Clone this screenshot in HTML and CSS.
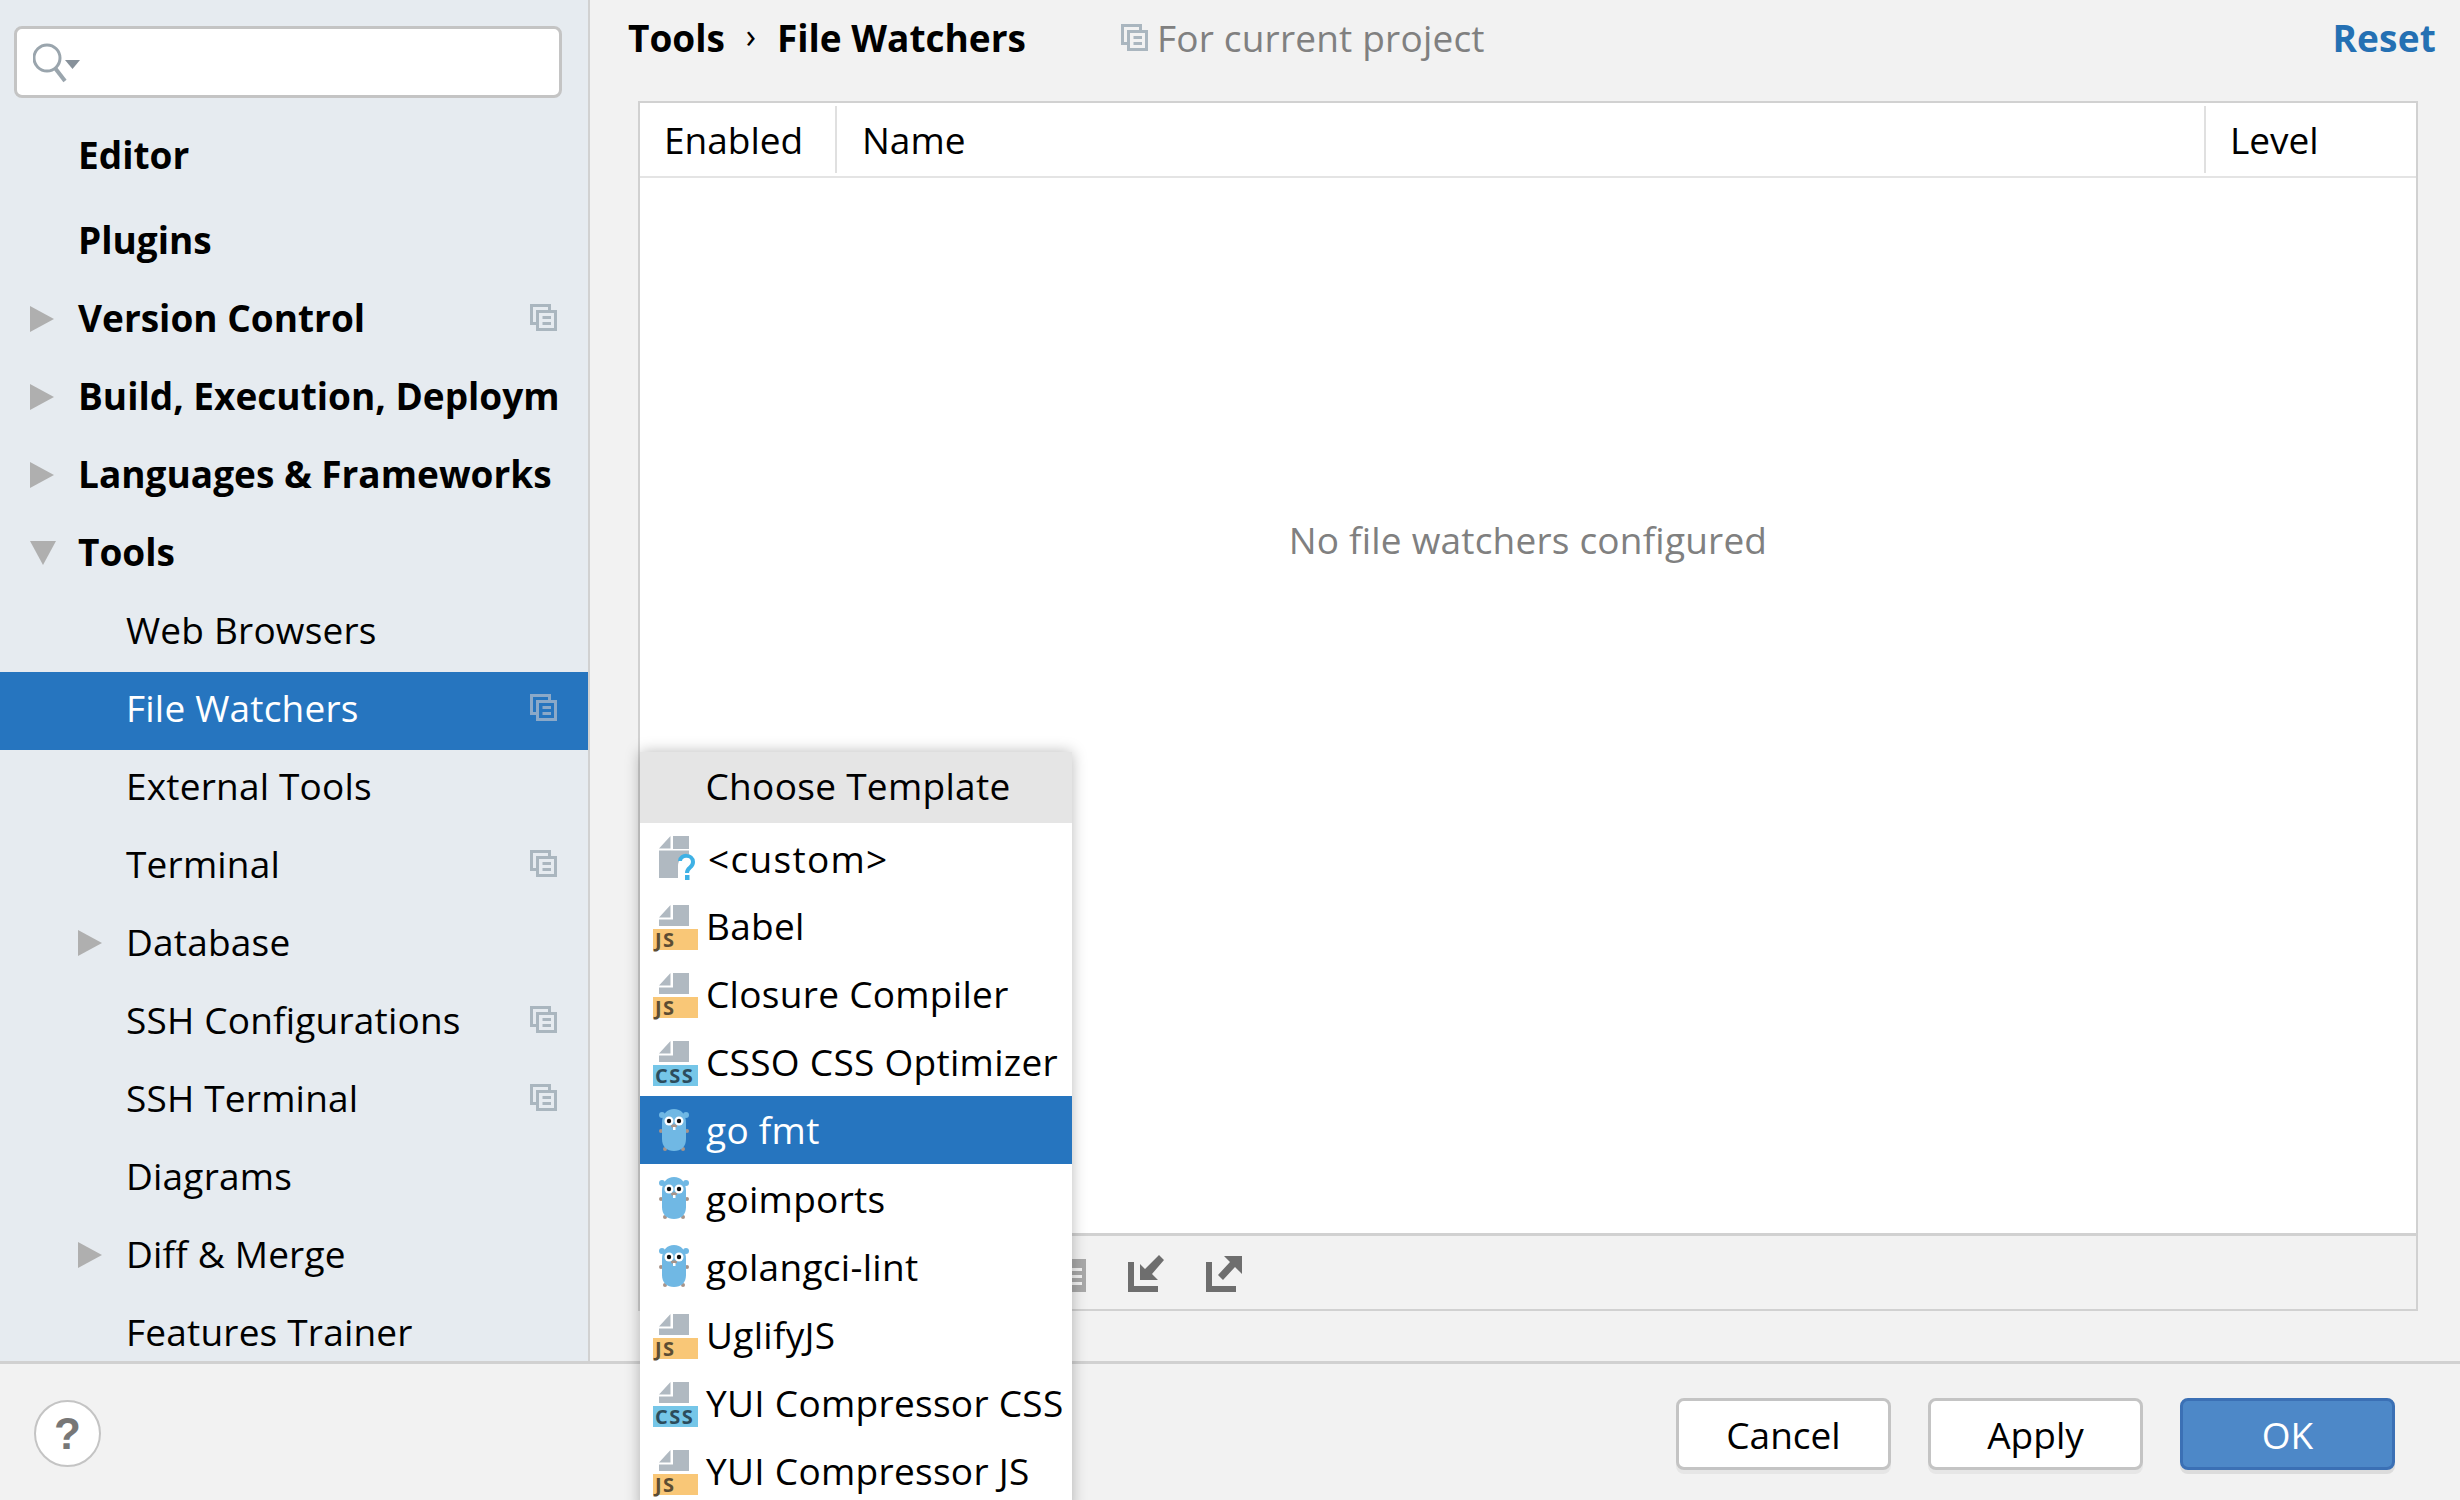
FILE: index.html
```html
<!DOCTYPE html>
<html>
  <head>
    <meta charset="UTF-8">
    <title>Settings - File Watchers</title>
    <link rel="stylesheet" href="styles.css">
  </head>
  <body>
    <svg class="defs" width="0" height="0">
      <symbol id="copy" viewBox="0 0 27 27">
        <path d="M0 0h21v6h-3V3H3v15h3v3H0z" fill="currentColor"/>
        <path d="M6 6h21v21H6zM9 9v15h15V9z" fill="currentColor" fill-rule="evenodd"/>
        <path d="M12.500 12H21v3h-8.500zM12.500 18H21v3h-8.500z" fill="currentColor"/>
      </symbol>
      <symbol id="file" viewBox="0 0 30 21">
        <path d="M0 12.500L11.500 0v12.500zM14 0h16v21H0v-6.500h14z" fill="#b0b9c1"/>
      </symbol>
      <symbol id="gopher" viewBox="0 0 30 42">
        <circle cx="3" cy="6" r="3" fill="#70b8e4"/>
        <circle cx="27" cy="6" r="3" fill="#70b8e4"/>
        <circle cx="2" cy="22" r="2" fill="#a8948a"/>
        <circle cx="28" cy="22" r="2" fill="#a8948a"/>
        <circle cx="6" cy="40" r="2" fill="#a8948a"/>
        <circle cx="24" cy="40" r="2" fill="#a8948a"/>
        <path d="M3 14C3 5 8 0 15 0s12 5 12 14v16c0 8-5 12-12 12S3 38 3 30z" fill="#70b8e4"/>
        <circle cx="10" cy="12" r="4.500" fill="#fff"/>
        <circle cx="20" cy="12" r="4.500" fill="#fff"/>
        <circle cx="10" cy="12" r="2.200" fill="#111"/>
        <circle cx="20" cy="12" r="2.200" fill="#111"/>
        <ellipse cx="15" cy="17" rx="3" ry="1.800" fill="#a8948a"/>
        <rect x="14" y="18" width="2.500" height="3" fill="#fff"/>
      </symbol>
    </svg>

    <div class="app">
      <aside class="sidebar">
        <div class="search">
          <svg class="search-icon" width="48" height="44" viewBox="0 0 48 44">
            <circle cx="14" cy="16" r="13" fill="none" stroke="#9aa5ad" stroke-width="3"/>
            <path d="M22 26l10 13" stroke="#9aa5ad" stroke-width="4"/>
            <path d="M32 18h15l-7.500 9z" fill="#87919a"/>
          </svg>
        </div>
        <ul class="tree">
          <li class="row top"><span class="arrow-slot"></span>Editor</li>
          <li class="row top plugins"><span class="arrow-slot"></span>Plugins</li>
          <li class="row top"><span class="arrow-slot"><i class="arrow"></i></span><span class="label">Version Control</span><svg class="copy"><use href="#copy"/></svg></li>
          <li class="row top"><span class="arrow-slot"><i class="arrow"></i></span><span class="label">Build, Execution, Deploym</span></li>
          <li class="row top"><span class="arrow-slot"><i class="arrow"></i></span><span class="label">Languages &amp; Frameworks</span></li>
          <li class="row top"><span class="arrow-slot"><i class="arrow down"></i></span><span class="label">Tools</span></li>
          <li class="row sub"><span class="label">Web Browsers</span></li>
          <li class="row sub selected"><span class="label">File Watchers</span><svg class="copy"><use href="#copy"/></svg></li>
          <li class="row sub"><span class="label">External Tools</span></li>
          <li class="row sub"><span class="label">Terminal</span><svg class="copy"><use href="#copy"/></svg></li>
          <li class="row sub has-arrow"><span class="arrow-slot"><i class="arrow"></i></span><span class="label">Database</span></li>
          <li class="row sub"><span class="label">SSH Configurations</span><svg class="copy"><use href="#copy"/></svg></li>
          <li class="row sub"><span class="label">SSH Terminal</span><svg class="copy"><use href="#copy"/></svg></li>
          <li class="row sub"><span class="label">Diagrams</span></li>
          <li class="row sub has-arrow"><span class="arrow-slot"><i class="arrow"></i></span><span class="label">Diff &amp; Merge</span></li>
          <li class="row sub"><span class="label">Features Trainer</span></li>
        </ul>
      </aside>

      <main class="content">
        <header class="crumbs">
          <span class="crumb">Tools</span>
          <span class="crumb-sep">›</span>
          <span class="crumb">File Watchers</span>
          <svg class="copy scope-icon"><use href="#copy"/></svg>
          <span class="scope">For current project</span>
          <a class="reset">Reset</a>
        </header>

        <section class="panel">
          <div class="thead">
            <div class="th th-enabled">Enabled</div>
            <div class="th th-name">Name</div>
            <div class="th th-level">Level</div>
          </div>
          <div class="empty">No file watchers configured</div>
          <div class="toolbar">
            <svg class="tool" width="26" height="38" viewBox="0 0 26 38">
              <path d="M0 5h26v33H0zM8 14v3h14v-3zM8 21v3h14v-3zM8 28v3h14v-3z" fill="#a9a9a9" fill-rule="evenodd"/>
            </svg>
            <svg class="tool" width="38" height="38" viewBox="0 0 38 38">
              <path d="M0 8h6v24h24v6H0z" fill="#6e6e6e"/>
              <path d="M12 10v16h18l-6-6L36 6l-5-5-14 14z" fill="#6e6e6e"/>
            </svg>
            <svg class="tool tool-export" width="38" height="38" viewBox="0 0 38 38">
              <path d="M0 8h6v24h24v6H0z" fill="#6e6e6e"/>
              <path d="M36 2H18l6 6-12 13 5 5 12-13 7 7z" fill="#6e6e6e"/>
            </svg>
          </div>
        </section>
      </main>

      <footer class="footer">
        <button class="help">?</button>
        <div class="actions">
          <button class="btn">Cancel</button>
          <button class="btn">Apply</button>
          <button class="btn primary">OK</button>
        </div>
      </footer>
    </div>

    <!-- Popup de templates -->
    <div class="popup">
      <div class="popup-title">Choose Template</div>
      <div class="item">
        <span class="item-icon">
          <svg width="45" height="46" viewBox="0 0 45 46">
            <path d="M6 12.500L17.500 0v12.500zM20 0h16v13H20zM6 14.500h30V19a11 11 0 0 0-11 11v12H6z" fill="#b0b9c1"/>
            <path d="M27 25c0-7 13-7 13 1 0 6-6 5-6 11" fill="none" stroke="#3eb1e5" stroke-width="4"/>
            <rect x="32" y="39" width="4.500" height="5" fill="#3eb1e5"/>
          </svg>
        </span>
        <span class="custom-name">&lt;custom&gt;</span>
      </div>
      <div class="item"><span class="item-icon"><svg class="file-icon"><use href="#file"/></svg><b class="badge js">JS</b></span><span>Babel</span></div>
      <div class="item"><span class="item-icon"><svg class="file-icon"><use href="#file"/></svg><b class="badge js">JS</b></span><span>Closure Compiler</span></div>
      <div class="item"><span class="item-icon"><svg class="file-icon"><use href="#file"/></svg><b class="badge css">CSS</b></span><span>CSSO CSS Optimizer</span></div>
      <div class="item active"><span class="item-icon"><svg class="gopher"><use href="#gopher"/></svg></span><span>go fmt</span></div>
      <div class="item"><span class="item-icon"><svg class="gopher"><use href="#gopher"/></svg></span><span>goimports</span></div>
      <div class="item"><span class="item-icon"><svg class="gopher"><use href="#gopher"/></svg></span><span>golangci-lint</span></div>
      <div class="item"><span class="item-icon"><svg class="file-icon"><use href="#file"/></svg><b class="badge js">JS</b></span><span>UglifyJS</span></div>
      <div class="item"><span class="item-icon"><svg class="file-icon"><use href="#file"/></svg><b class="badge css">CSS</b></span><span>YUI Compressor CSS</span></div>
      <div class="item"><span class="item-icon"><svg class="file-icon"><use href="#file"/></svg><b class="badge js">JS</b></span><span>YUI Compressor JS</span></div>
    </div>
  </body>
</html>
```

FILE: styles.css
```css
* {
  box-sizing: border-box;
}

html, body {
  margin: 0;
  height: 1500px;
  overflow: hidden;
}

body {
  position: relative;
  background-color: #f2f2f2;
  color: #000;
  font-family: "Open Sans", "Noto Sans", sans-serif;
  font-size: 37px;
  letter-spacing: 0.2px;
}

.defs {
  display: block;
  height: 0;
}

.app {
  display: grid;
  grid-template-columns: 590px 1fr;
  grid-template-rows: 1361px 139px;
  height: 1500px;
}

/* Sidebar */
.sidebar {
  background-color: #e6ebf0;
  border-right: 2px solid #d1d1d1;
  overflow: hidden;
  padding-top: 26px;
}

.search {
  display: flex;
  align-items: center;
  width: 548px;
  height: 72px;
  margin-left: 14px;
  padding: 3px 0 0 16px;
  background-color: #fff;
  border: 3px solid #c4c4c4;
  border-radius: 8px;
}

.tree {
  list-style: none;
  margin: 21px 0 0;
  padding: 0;
}

.row {
  display: flex;
  align-items: center;
  height: 78px;
  padding-right: 31px;
  padding-bottom: 7px;
  white-space: nowrap;
}

.row.top {
  font-weight: 700;
  letter-spacing: 0;
  padding-left: 30px;
}

.row.plugins {
  margin-top: 7px;
}

.row.sub {
  padding-left: 126px;
}

.row.sub.has-arrow {
  padding-left: 78px;
}

.arrow-slot {
  flex: none;
  width: 48px;
  padding-top: 3px;
}

.label {
  flex: 1;
}

.arrow {
  display: block;
  width: 0;
  height: 0;
  border-left: 24px solid #afafaf;
  border-top: 13.500px solid transparent;
  border-bottom: 13.500px solid transparent;
}

.arrow.down {
  border-top: 24px solid #afafaf;
  border-bottom: none;
  border-left: 13.500px solid transparent;
  border-right: 13.500px solid transparent;
}

.copy {
  flex: none;
  width: 27px;
  height: 27px;
  color: #aab6bf;
}

.row.selected {
  background-color: #2675bf;
  color: #fff;
}

.row.selected .copy {
  color: #8ba9c8;
}

/* Conteudo */
.content {
  padding: 0 42px 0 38px;
  overflow: hidden;
}

.crumbs {
  display: flex;
  align-items: center;
  height: 78px;
  margin-right: -18px;
  padding-bottom: 3px;
}

.crumb {
  font-weight: 700;
  letter-spacing: 0;
}

.crumb-sep {
  width: 52px;
  text-align: center;
  font-size: 34px;
  padding-bottom: 5px;
}

.scope-icon {
  margin-left: 95px;
  margin-right: 9px;
}

.scope {
  color: #808080;
}

.reset {
  margin-left: auto;
  color: #2470b3;
  font-weight: 700;
}

.panel {
  display: flex;
  flex-direction: column;
  height: 1210px;
  margin: 23px 0 0 10px;
  background-color: #fff;
  border: 2px solid #d1d1d1;
}

.thead {
  display: flex;
  flex: none;
  height: 75px;
  padding: 3px 0;
  border-bottom: 2px solid #e4e4e4;
}

.th {
  display: flex;
  align-items: center;
  padding-left: 24px;
  border-right: 2px solid #e0e0e0;
  letter-spacing: 0;
}

.th-enabled {
  width: 197px;
}

.th-name {
  flex: 1;
  padding-left: 25px;
}

.th-level {
  width: 210px;
  border-right: none;
}

.empty {
  flex: 1;
  padding-top: 336px;
  color: #808080;
  text-align: center;
}

.toolbar {
  display: flex;
  flex: none;
  align-items: center;
  gap: 42px;
  height: 76px;
  padding-left: 420px;
  background-color: #f2f2f2;
  border-top: 3px solid #d1d1d1;
}

.tool-export {
  margin-left: -2px;
}

/* Rodape */
.footer {
  grid-column: 1 / 3;
  display: flex;
  align-items: flex-start;
  justify-content: space-between;
  padding: 36px 65px 0 34px;
  border-top: 3px solid #d1d1d1;
}

.help {
  width: 67px;
  height: 67px;
  padding: 0;
  background-color: #fff;
  border: 2px solid #c4c4c4;
  border-radius: 50%;
  color: #777;
  font-family: "Liberation Sans", sans-serif;
  font-size: 44px;
  font-weight: 700;
}

.actions {
  display: flex;
  gap: 37px;
  margin-top: -2px;
}

.btn {
  width: 215px;
  height: 72px;
  background-color: #fff;
  border: 3px solid #c4c4c4;
  border-radius: 8px;
  box-shadow: 0 4px 0 #e6e6e6;
  color: #000;
  font-family: inherit;
  font-size: 37px;
}

.btn.primary {
  background-color: #4d88c8;
  border-color: #3b70b5;
  box-shadow: 0 4px 0 #dcdcdc;
  color: #fff;
}

/* Popup */
.popup {
  position: absolute;
  left: 640px;
  top: 752px;
  width: 432px;
  height: 760px;
  background-color: #fff;
  box-shadow: 0 0 14px rgba(0, 0, 0, 0.28);
  letter-spacing: 0.3px;
  white-space: nowrap;
}

.popup-title {
  height: 71px;
  padding-left: 4px;
  line-height: 68px;
  background-color: #e5e5e5;
  text-align: center;
}

.item {
  display: flex;
  align-items: center;
  gap: 8px;
  height: 68.200px;
  padding-left: 13px;
}

.item.active {
  background-color: #2675bf;
  color: #fff;
}

.item-icon {
  display: flex;
  flex: none;
  flex-direction: column;
  align-items: flex-start;
  width: 45px;
  padding-top: 4px;
}

.custom-name {
  margin-left: 2px;
  padding-top: 2px;
  letter-spacing: 1.300px;
}

.file-icon {
  width: 30px;
  height: 21px;
  margin: 0 0 3px 6px;
}

.gopher {
  width: 30px;
  height: 42px;
  margin: -4px 0 0 6px;
}

.badge {
  width: 45px;
  height: 21px;
  padding-left: 2px;
  color: #5c4d33;
  font-size: 20px;
  line-height: 22px;
  letter-spacing: 1.500px;
}

.badge.js {
  background-color: #f9c777;
}

.badge.css {
  background-color: #75c6e8;
  color: #2c4c5c;
}
```
